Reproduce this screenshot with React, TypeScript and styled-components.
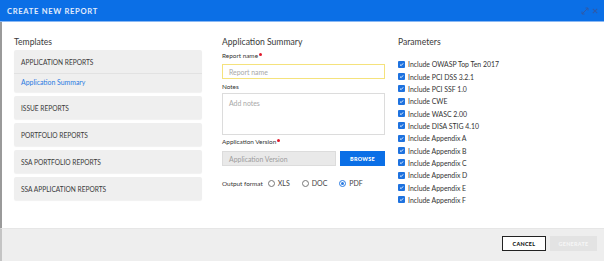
import React from 'react';
import styled, { createGlobalStyle } from 'styled-components';

const GlobalStyle = createGlobalStyle`
  html, body {
    margin: 0;
    padding: 0;
    background: #ffffff;
  }
  body {
    font-family: Lato, "Open Sans", Arial, sans-serif;
    color: #333;
  }
  * { box-sizing: border-box; }
`;

const Modal = styled.div`
  width: 604px;
  height: 261px;
  display: flex;
  flex-direction: column;
  overflow: hidden;
`;

const Header = styled.div`
  height: 22px;
  flex: none;
  background: #0b6fe6;
  border-bottom: 1px solid #8ab8f3;
  display: flex;
  align-items: center;
  justify-content: space-between;
  padding: 0 6px 0 7px;
  .title {
    color: #e1ecfc;
    font-size: 7.6px;
    font-weight: 700;
    letter-spacing: 0.7px;
  }
  .tools {
    display: flex;
    gap: 3px;
    align-items: center;
    margin-top: 0;
  }
  .tools svg {
    display: block;
  }
`;

const Body = styled.div`
  flex: 1;
  display: flex;
  border-left: 2px solid #9a9a9a;
  padding: 14px 0 0 12px;
`;

const Column = styled.div<{ $width?: number; $gap: number }>`
  width: ${(p) => (p.$width ? `${p.$width}px` : 'auto')};
  flex: ${(p) => (p.$width ? 'none' : '1')};
  margin-right: ${(p) => p.$gap}px;
  display: flex;
  flex-direction: column;
`;

const SectionTitle = styled.div`
  font-size: 8.6px;
  line-height: 12px;
  color: #3a3a3a;
  margin-bottom: 2px;
`;

const Card = styled.div`
  background: #efefef;
  border-radius: 2px;
  box-shadow: 0 1px 1px rgba(0, 0, 0, 0.06);
  margin-bottom: 4px;
`;

const CardRow = styled.div<{ $sub?: boolean }>`
  height: ${(p) => (p.$sub ? 19 : 23)}px;
  display: flex;
  align-items: center;
  padding-left: 7px;
  font-size: ${(p) => (p.$sub ? 6.9 : 6.6)}px;
  color: ${(p) => (p.$sub ? '#2a7be2' : '#3a3a3a')};
  text-transform: ${(p) => (p.$sub ? 'none' : 'uppercase')};
  border-top: ${(p) => (p.$sub ? '1px solid #e2e2e2' : 'none')};
  padding-bottom: ${(p) => (p.$sub ? 2 : 0)}px;
`;

const FieldLabel = styled.div<{ $mt: number }>`
  font-size: 6.4px;
  line-height: 9px;
  color: #333;
  display: flex;
  align-items: center;
  gap: 1px;
  margin-top: ${(p) => p.$mt}px;
`;

const Required = styled.span`
  width: 3px;
  height: 3px;
  border-radius: 50%;
  background: #e0192b;
  margin-top: -2px;
`;

const TextInput = styled.div<{ $focused?: boolean; $disabled?: boolean }>`
  height: 15px;
  border: 1px solid ${(p) => (p.$focused ? '#f5e27c' : '#dcdcdc')};
  background: ${(p) => (p.$disabled ? '#e9e9e9' : '#fff')};
  padding-left: 6px;
  display: flex;
  align-items: center;
  font-size: 6.9px;
  color: ${(p) => (p.$disabled ? '#9d9d9d' : '#a8a8a8')};
  flex: 1;
`;

const TextArea = styled.div`
  height: 42px;
  margin-top: 2px;
  border: 1px solid #dcdcdc;
  padding: 5px 6px;
  font-size: 6.9px;
  color: #a8a8a8;
`;

const InlineRow = styled.div<{ $mt: number }>`
  display: flex;
  align-items: center;
  margin-top: ${(p) => p.$mt}px;
  gap: 4px;
`;

const PrimaryButton = styled.div`
  width: 45px;
  height: 15px;
  background: #0b6fe6;
  color: #fff;
  font-size: 5.4px;
  font-weight: 900;
  letter-spacing: 0.3px;
  display: flex;
  align-items: center;
  justify-content: center;
`;

const FormatLabel = styled.span`
  font-size: 6.4px;
  color: #333;
  margin-right: 1px;
`;

const RadioOption = styled.label<{ $checked?: boolean }>`
  display: flex;
  align-items: center;
  gap: 3px;
  font-size: 7px;
  color: #444;
  margin-right: 8px;
  .dot {
    width: 7px;
    height: 7px;
    border-radius: 50%;
    border: 1px solid ${(p) => (p.$checked ? '#2a7be2' : '#777')};
    display: flex;
    align-items: center;
    justify-content: center;
  }
  .dot::after {
    content: '';
    width: 3px;
    height: 3px;
    border-radius: 50%;
    background: ${(p) => (p.$checked ? '#2a7be2' : 'transparent')};
  }
`;

const ParamList = styled.div`
  margin-top: 8px;
  display: flex;
  flex-direction: column;
`;

const ParamRow = styled.div`
  height: 12.35px;
  display: flex;
  align-items: center;
  gap: 3px;
  font-size: 6.9px;
  color: #333;
`;

const CheckBox = styled.span`
  width: 7px;
  height: 7px;
  border-radius: 1px;
  background: #1e72df;
  display: flex;
  align-items: center;
  justify-content: center;
`;

const Footer = styled.div`
  height: 33px;
  flex: none;
  background: #eeeeee;
  border-left: 2px solid #c4c4c4;
  border-top: 1px solid #e6e6e6;
  display: flex;
  justify-content: flex-end;
  align-items: flex-start;
  padding: 7px 7px 0 0;
  gap: 4px;
`;

const FooterButton = styled.div<{ $variant: 'outline' | 'disabled' }>`
  height: 15px;
  width: ${(p) => (p.$variant === 'outline' ? 44 : 47)}px;
  display: flex;
  align-items: center;
  justify-content: center;
  font-size: 5.4px;
  font-weight: 900;
  letter-spacing: 0.3px;
  background: ${(p) => (p.$variant === 'outline' ? '#fff' : '#e3e3e3')};
  color: ${(p) => (p.$variant === 'outline' ? '#111' : '#f6f6f6')};
  border: ${(p) => (p.$variant === 'outline' ? '1.5px solid #222' : 'none')};
`;

const templates = [
  { name: 'Application Reports', children: ['Application Summary'] },
  { name: 'Issue Reports', children: [] },
  { name: 'Portfolio Reports', children: [] },
  { name: 'SSA Portfolio Reports', children: [] },
  { name: 'SSA Application Reports', children: [] },
];

const params = [
  'Include OWASP Top Ten 2017',
  'Include PCI DSS 3.2.1',
  'Include PCI SSF 1.0',
  'Include CWE',
  'Include WASC 2.00',
  'Include DISA STIG 4.10',
  'Include Appendix A',
  'Include Appendix B',
  'Include Appendix C',
  'Include Appendix D',
  'Include Appendix E',
  'Include Appendix F',
];

const Check = () => (
  <svg width="5" height="5" viewBox="0 0 10 10">
    <path d="M2 5.2 L4.2 7.3 L8.2 2.8" fill="none" stroke="#fff" strokeWidth="1.8" />
  </svg>
);

const App = () => {
  return (
    <Modal>
      <GlobalStyle />
      <Header>
        <span className="title">CREATE NEW REPORT</span>
        <div className="tools">
          <svg width="8" height="8" viewBox="0 0 8 8">
            <path d="M1 7 L7 1 M4.5 1 H7 V3.5 M1 4.5 V7 H3.5" fill="none" stroke="#2f5aa8" strokeWidth="1" />
          </svg>
          <svg width="6" height="6" viewBox="0 0 6 6">
            <path d="M0.8 0.8 L5.2 5.2 M5.2 0.8 L0.8 5.2" fill="none" stroke="#2f5aa8" strokeWidth="1.1" />
          </svg>
        </div>
      </Header>
      <Body>
        {/* Templates */}
        <Column $width={188} $gap={20}>
          <SectionTitle>Templates</SectionTitle>
          {templates.map((t) => (
            <Card key={t.name}>
              <CardRow>{t.name}</CardRow>
              {t.children.map((c) => (
                <CardRow $sub key={c}>
                  {c}
                </CardRow>
              ))}
            </Card>
          ))}
        </Column>

        {/* Application Summary */}
        <Column $width={163} $gap={13}>
          <SectionTitle>Application Summary</SectionTitle>
          <FieldLabel $mt={1}>
            Report name<Required />
          </FieldLabel>
          <InlineRow $mt={4}>
            <TextInput $focused>Report name</TextInput>
          </InlineRow>
          <FieldLabel $mt={3}>Notes</FieldLabel>
          <TextArea>Add notes</TextArea>
          <FieldLabel $mt={2}>
            Application Version<Required />
          </FieldLabel>
          <InlineRow $mt={5}>
            <TextInput $disabled>Application Version</TextInput>
            <PrimaryButton>BROWSE</PrimaryButton>
          </InlineRow>
          <InlineRow $mt={13}>
            <FormatLabel>Output format</FormatLabel>
            <RadioOption>
              <span className="dot" />
              XLS
            </RadioOption>
            <RadioOption>
              <span className="dot" />
              DOC
            </RadioOption>
            <RadioOption $checked>
              <span className="dot" />
              PDF
            </RadioOption>
          </InlineRow>
        </Column>

        {/* Parameters */}
        <Column $gap={0}>
          <SectionTitle>Parameters</SectionTitle>
          <ParamList>
            {params.map((p) => (
              <ParamRow key={p}>
                <CheckBox>
                  <Check />
                </CheckBox>
                {p}
              </ParamRow>
            ))}
          </ParamList>
        </Column>
      </Body>
      <Footer>
        <FooterButton $variant="outline">CANCEL</FooterButton>
        <FooterButton $variant="disabled">GENERATE</FooterButton>
      </Footer>
    </Modal>
  );
};

export default App;
